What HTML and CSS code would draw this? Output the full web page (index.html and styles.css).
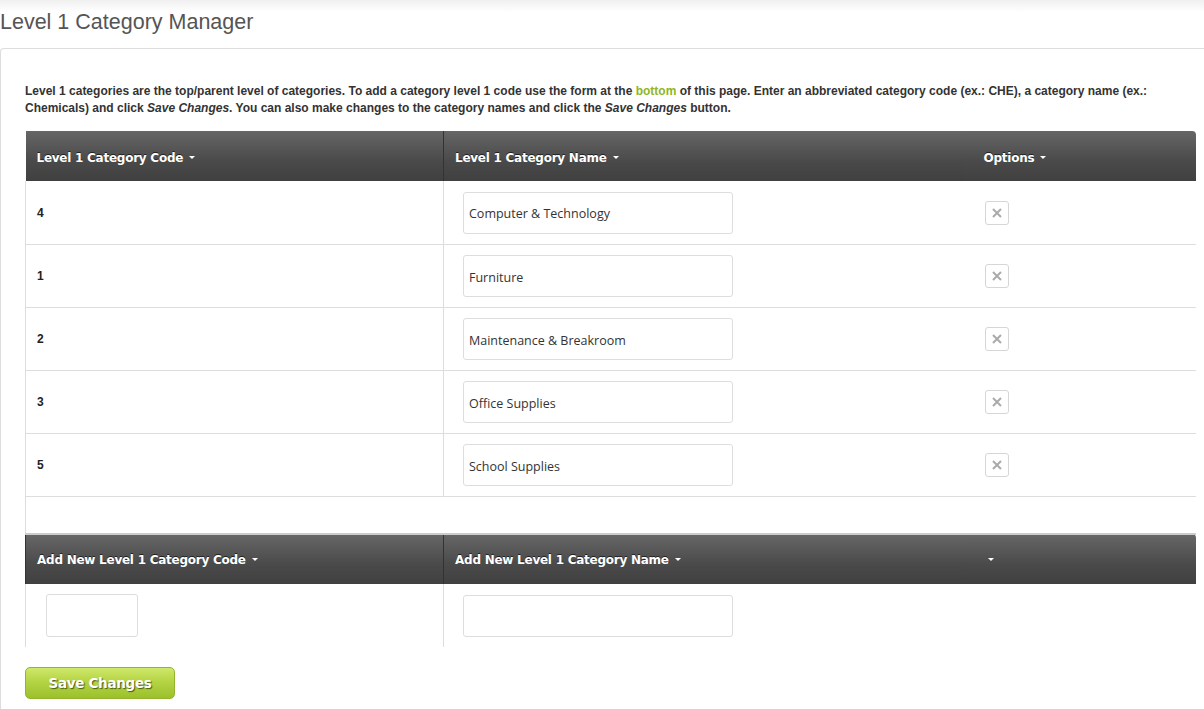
FILE: index.html
```html
<!DOCTYPE html>
<html>
<head>
<meta charset="utf-8">
<link rel="stylesheet" href="styles.css">
</head>
<body>
<div class="topshade"></div>
<h1 class="title">Level 1 Category Manager</h1>
<div class="panel">
  <p class="intro">Level 1 categories are the top/parent level of categories. To add a category level 1 code use the form at the <a class="link">bottom</a> of this page. Enter an abbreviated category code (ex.: CHE), a category name (ex.: Chemicals) and click <i>Save Changes</i>. You can also make changes to the category names and click the <i>Save Changes</i> button.</p>

  <table class="grid">
    <colgroup><col class="c1"><col class="c2"><col class="c3"></colgroup>
    <thead>
      <tr>
        <th class="first">Level 1 Category Code <span class="caret"></span></th>
        <th>Level 1 Category Name <span class="caret"></span></th>
        <th class="opt last">Options <span class="caret"></span></th>
      </tr>
    </thead>
    <tbody>
      <tr class="firstrow"><td class="code">4</td><td class="name"><input class="txt" value="Computer &amp; Technology"></td><td class="opt"><span class="del"><svg width="12" height="12" viewBox="0 0 12 12"><path d="M2 2L10 10M10 2L2 10" stroke="#aaa" stroke-width="2"/></svg></span></td></tr>
      <tr><td class="code">1</td><td class="name"><input class="txt" value="Furniture"></td><td class="opt"><span class="del"><svg width="12" height="12" viewBox="0 0 12 12"><path d="M2 2L10 10M10 2L2 10" stroke="#aaa" stroke-width="2"/></svg></span></td></tr>
      <tr><td class="code">2</td><td class="name"><input class="txt" value="Maintenance &amp; Breakroom"></td><td class="opt"><span class="del"><svg width="12" height="12" viewBox="0 0 12 12"><path d="M2 2L10 10M10 2L2 10" stroke="#aaa" stroke-width="2"/></svg></span></td></tr>
      <tr><td class="code">3</td><td class="name"><input class="txt" value="Office Supplies"></td><td class="opt"><span class="del"><svg width="12" height="12" viewBox="0 0 12 12"><path d="M2 2L10 10M10 2L2 10" stroke="#aaa" stroke-width="2"/></svg></span></td></tr>
      <tr><td class="code">5</td><td class="name"><input class="txt" value="School Supplies"></td><td class="opt"><span class="del"><svg width="12" height="12" viewBox="0 0 12 12"><path d="M2 2L10 10M10 2L2 10" stroke="#aaa" stroke-width="2"/></svg></span></td></tr>
      <tr class="spacer"><td colspan="3"></td></tr>
    </tbody>
    <thead class="second">
      <tr>
        <th>Add New Level 1 Category Code <span class="caret"></span></th>
        <th>Add New Level 1 Category Name <span class="caret"></span></th>
        <th class="opt2"><span class="caret"></span></th>
      </tr>
    </thead>
    <tbody>
      <tr class="newrow">
        <td class="newcode"><input class="txt small"></td>
        <td class="name"><input class="txt"></td>
        <td class="blank"></td>
      </tr>
    </tbody>
  </table>

  <button class="save">Save Changes</button>
</div>
</body>
</html>
```

FILE: styles.css
```css
html, body {
  margin: 0;
  padding: 0;
  background: #fff;
  overflow: hidden;
}
body {
  font-family: "Liberation Sans", Arial, sans-serif;
  color: #333;
  position: relative;
}
.topshade {
  position: absolute;
  left: 0; right: 0; top: 0;
  height: 12px;
  background: linear-gradient(#f0f0f0, #fff);
}
.title {
  position: relative;
  margin: 0;
  padding: 9px 0 0 0;
  height: 39px;
  box-sizing: border-box;
  font-weight: normal;
  font-size: 21.5px;
  line-height: 26px;
  color: #555;
  font-family: "Liberation Sans", Arial, sans-serif;
}
.panel {
  border: 1px solid #ddd;
  border-right: none;
  border-radius: 4px 0 0 0;
  margin-top: 9px;
  padding: 27px 0 20px 24px;
  height: 700px;
}
.intro {
  margin: 7px 0 14px 0;
  font-size: 12px;
  line-height: 17px;
  font-weight: bold;
  color: #333;
  width: 1150px;
}
.link { color: #8fb526; }
.grid {
  border-collapse: collapse;
  width: 1170px;
  table-layout: fixed;
}
col.c1 { width: 418px; }
col.c2 { width: 520px; }
col.c3 { width: 232px; }
.grid th {
  height: 50px;
  box-sizing: border-box;
  padding: 3px 0 0 11px;
  text-align: left;
  background: linear-gradient(#666 0%, #4a4a4a 60%, #404040 100%);
  color: #fff;
  font-family: "DejaVu Sans", Tahoma, sans-serif;
  font-size: 12px;
  font-weight: bold;
  text-shadow: 0 -1px 0 #222;
  border-left: 1px solid #333;
  letter-spacing: -0.25px;
}
.grid th.first { border-left: none; }
.grid thead tr:first-child th:last-child { border-top-right-radius: 4px; }
.grid th.opt, .grid th.opt2 { border-left: none; padding-left: 20px; }
.grid th.opt2 { padding-left: 22px; }
.second th { border-top: 2px solid #ccc; padding-top: 1px; }
.caret {
  display: inline-block;
  width: 0; height: 0;
  border-left: 3px solid transparent;
  border-right: 3px solid transparent;
  border-top: 3px solid #fff;
  vertical-align: middle;
  margin-left: 2px;
  margin-top: -2px;
}
.grid td {
  height: 62px;
  border-bottom: 1px solid #ddd;
  padding: 0;
  vertical-align: middle;
}
.grid tr.firstrow td { height: 63px; }
.grid td.code {
  padding-left: 11px;
  font-size: 12px;
  font-weight: bold;
  color: #222;
  border-left: 1px solid #ddd;
  border-right: 1px solid #ddd;
}
.grid td.name { padding-left: 19px; }
.grid td.opt { padding-left: 21px; }
.grid tr.spacer td {
  height: 36px;
  border-bottom: none;
  border-left: 1px solid #ddd;
}
.txt {
  display: block;
  box-sizing: border-box;
  width: 270px;
  height: 42px;
  border: 1px solid #ddd;
  border-radius: 3px;
  padding: 2px 5px 0 5px;
  font-family: "Open Sans", sans-serif;
  font-size: 12.5px;
  color: #333;
  background: #fff;
  outline: none;
}
.txt.small { width: 92px; height: 43px; }
.del {
  display: flex;
  align-items: center;
  justify-content: center;
  box-sizing: border-box;
  width: 24px;
  height: 24px;
  border: 1px solid #d6d6d6;
  border-radius: 3px;
}
.grid tr.newrow td {
  height: 63px;
  border-bottom: none;
}
.grid td.newcode {
  padding-left: 20px;
  border-left: 1px solid #ddd;
  border-right: 1px solid #ddd;
}
.save {
  display: block;
  margin-top: 20px;
  width: 150px;
  height: 32px;
  border: 1px solid #93b52e;
  border-radius: 5px;
  background: linear-gradient(#cfe86a 0%, #b4d444 45%, #9cc02c 100%);
  color: #fff;
  font-family: "DejaVu Sans", Tahoma, sans-serif;
  font-weight: bold;
  font-size: 13.5px;
  text-shadow: 1px 1px 1px #4a5a10;
  letter-spacing: -0.3px;
  padding: 0;
}
```
